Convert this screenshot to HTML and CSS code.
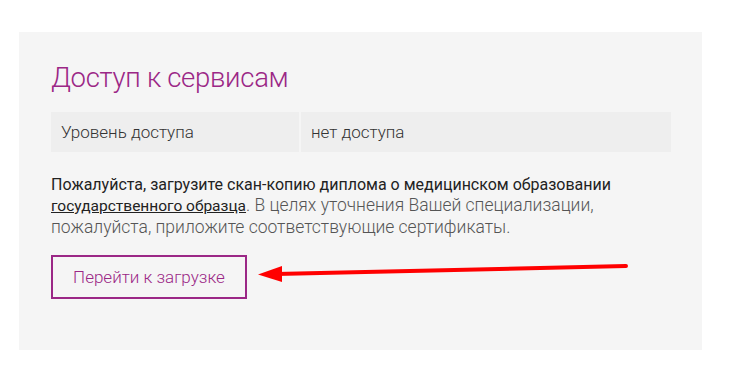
FILE: index.html
```html
<!DOCTYPE html>
<html lang="ru">
<head>
  <meta charset="UTF-8" />
  <meta name="viewport" content="width=device-width, initial-scale=1.0"/>
  <title>Доступ к сервисам</title>
  <link rel="stylesheet" href="styles.css">
</head>
<body>
  <section class="panel">
    <h1>Доступ к сервисам</h1>

    <div class="access-row">
      <div class="cell cell-label">Уровень доступа</div>
      <div class="cell cell-value">нет доступа</div>
    </div>

    <p class="note">
      <strong>Пожалуйста, загрузите скан-копию диплома о медицинском образовании</strong>
      <a class="doc-link" href="#">государственного образца</a>. В целях уточнения Вашей специализации,
      пожалуйста, приложите соответствующие сертификаты.
    </p>

    <a class="upload-btn" href="#">Перейти к загрузке</a>

    <!-- annotation arrow -->
    <svg class="arrow" width="380" height="24" viewBox="0 0 380 24">
      <line x1="18" y1="15" x2="368" y2="7" stroke="#ff0000" stroke-width="4" stroke-linecap="round"/>
      <polygon points="0,15.5 24,7 24,23" fill="#ff0000"/>
    </svg>
  </section>
</body>
</html>
```

FILE: styles.css
```css
:root {
  --bg: #ffffff;
  --panel: #f5f5f5;
  --cell: #eeeeee;
  --accent: #9b2786;
  --text: #222222;
  --muted: #555555;
}

body {
  background: var(--bg);
  margin: 0;
  padding: 32px 0 0 19px;
  font-family: Roboto, "Liberation Sans", sans-serif;
}

.panel {
  position: relative;
  width: 683px;
  height: 318px;
  box-sizing: border-box;
  background: var(--panel);
  padding: 30px 31px 0 32px;
}

.panel h1 {
  margin: 0;
  font-size: 27.5px;
  font-weight: 300;
  line-height: 32px;
  color: var(--accent);
  letter-spacing: -0.3px;
}

.access-row {
  display: flex;
  gap: 2px;
  margin-top: 18px;
  height: 40px;
}

.cell {
  background: var(--cell);
  display: flex;
  align-items: center;
  padding: 0 10px;
  font-size: 17px;
  font-weight: 300;
  color: #333;
}

.cell-label {
  width: 248px;
  box-sizing: border-box;
}

.cell-value {
  flex: 1;
}

.note {
  margin: 22px 0 0;
  font-size: 17.5px;
  line-height: 21px;
  font-weight: 300;
  color: var(--muted);
}

.note strong {
  font-size: 16px;
  font-weight: 400;
  color: var(--text);
}

.doc-link {
  font-size: 15.5px;
  font-weight: 400;
  color: var(--text);
  text-decoration: underline;
}

.upload-btn {
  display: inline-block;
  margin-top: 17px;
  width: 196px;
  height: 44px;
  box-sizing: border-box;
  border: 2px solid var(--accent);
  text-align: center;
  line-height: 40px;
  font-size: 17px;
  font-weight: 300;
  color: var(--accent);
  text-decoration: none;
}

.arrow {
  position: absolute;
  left: 239px;
  top: 227px;
}
```
